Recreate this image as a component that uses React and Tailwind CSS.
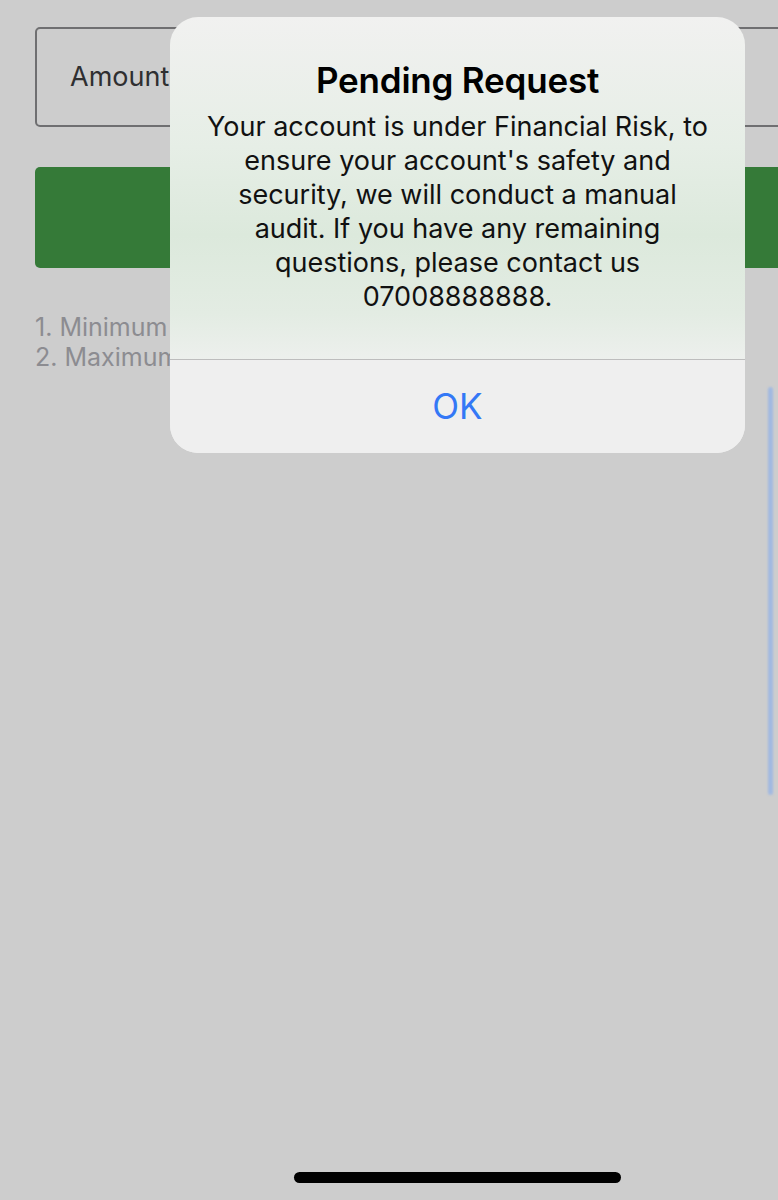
import { useState } from "react";

const notes = ["1. Minimum withdrawal amount", "2. Maximum withdrawal amount"];

export default function App() {
	const [open, setOpen] = useState(true);

	return (
		<div className="relative h-[1200px] w-[778px] overflow-hidden bg-[#cdcdcd] font-['Inter',sans-serif]">
			{/* page behind the alert (cropped on the right) */}
			<div className="flex flex-col pl-[35px] pt-[27px]">
				<div className="-mr-[30px] flex h-[100px] items-center rounded-[5px] border-2 border-[#6f6f71] pl-[33px] pr-4">
					<span className="text-[27px] text-[#2f2f31]">Amount</span>
				</div>
				<button type="button" className="-mr-[30px] mt-[40px] h-[101px] rounded-[5px] bg-[#357a38]" />
				<div className="mt-[44px] flex flex-col text-[25px] leading-[30px] text-[#8c8c91]">
					{notes.map((n) => (
						<p key={n} className="whitespace-nowrap">
							{n}
						</p>
					))}
				</div>
			</div>

			{open && (
				<div className="absolute left-[170px] top-[17px] w-[575px] overflow-hidden rounded-[28px] bg-[linear-gradient(180deg,#f1f1f0_0%,#e6eee6_30%,#dce9dc_50%,#e3ece3_68%,#eef0ee_80%,#f0f0f0_100%)]">
					<div className="flex flex-col items-center px-4 pb-[45px] pt-[42px] text-center">
						<h2 className="text-[35px] font-semibold leading-[42px] tracking-[-0.2px] text-black">Pending Request</h2>
						<p className="mt-[9px] text-[27px] leading-[34px] text-[#111]">
							Your account is under Financial Risk, to
							<br />
							ensure your account's safety and
							<br />
							security, we will conduct a manual
							<br />
							audit. If you have any remaining
							<br />
							questions, please contact us
							<br />
							07008888888.
						</p>
					</div>
					<div className="h-px bg-[#bdbdbd]" />
					<button
						type="button"
						onClick={() => setOpen(false)}
						className="flex h-[93px] w-full items-center justify-center bg-[#efefef] text-[35px] text-[#3478f6]"
					>
						OK
					</button>
				</div>
			)}

			{/* blue scribble on the right edge */}
			<div className="absolute left-[768px] top-[387px] h-[408px] w-[5px] rounded-full bg-[#93b3e8] opacity-75 blur-[0.8px]" />

			{/* home indicator */}
			<div className="absolute left-[294px] top-[1172px] h-[11px] w-[327px] rounded-full bg-black" />
		</div>
	);
}
